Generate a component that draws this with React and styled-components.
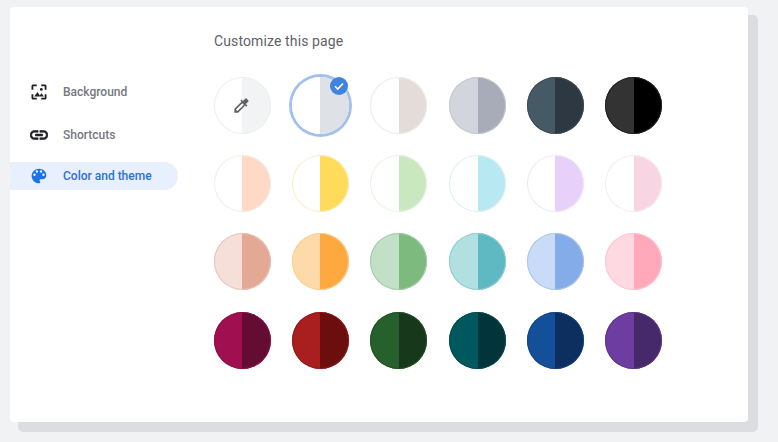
import React from "react";
import styled, { createGlobalStyle } from "styled-components";

const GlobalStyle = createGlobalStyle`
  html, body {
    margin: 0;
    padding: 0;
    background: #f1f2f4;
  }
  body {
    font-family: Roboto, "Liberation Sans", sans-serif;
  }
`;

const Page = styled.div`
  width: 778px;
  height: 442px;
  padding: 7px 0 0 10px;
  box-sizing: border-box;
  overflow: hidden;
`;

const Card = styled.div`
  display: flex;
  width: 738px;
  height: 415px;
  background: #ffffff;
  border-radius: 4px;
  box-shadow: 9px 9px 0 1px #dcdde0;
`;

const Sidebar = styled.nav`
  display: flex;
  flex-direction: column;
  width: 168px;
  margin-right: 36px;
  padding-top: 71px;
`;

const NavItem = styled.div`
  display: flex;
  align-items: center;
  gap: 15px;
  height: 28px;
  margin-top: ${(props) => props.$top || 0}px;
  padding-left: 20px;
  border-radius: 0 14px 14px 0;
  font-size: 12px;
  font-weight: 500;
  color: ${(props) => (props.$active ? "#2d72d2" : "#75787c")};
  background: ${(props) => (props.$active ? "#e8f0fe" : "transparent")};
`;

const NavIcon = styled.svg`
  width: 18px;
  height: 18px;
  flex: none;
  fill: ${(props) => (props.$active ? "#1a73e8" : "#202124")};
  stroke: ${(props) => (props.$bold ? "#202124" : "none")};
  stroke-width: ${(props) => (props.$bold ? 0.7 : 0)};
`;

const Main = styled.main`
  flex: 1;
  display: flex;
  flex-direction: column;
`;

const Title = styled.h1`
  margin: 26px 0 0;
  height: 17px;
  font-size: 14px;
  line-height: 17px;
  font-weight: 400;
  letter-spacing: 0.12px;
  color: #5f6368;
`;

const Grid = styled.div`
  display: grid;
  grid-template-columns: repeat(6, 57px);
  grid-auto-rows: 57px;
  gap: 21.2px;
  margin-top: 27px;
`;

const Swatch = styled.div`
  position: relative;
  display: flex;
  align-items: center;
  justify-content: center;
  width: 57px;
  height: 57px;
  border-radius: 50%;
  background: linear-gradient(
    90deg,
    ${(props) => props.$left} 50%,
    ${(props) => props.$right} 50%
  );
  box-shadow: ${(props) =>
    props.$selected
      ? "0 0 0 3px #a3c1ea"
      : `inset 0 0 0 1px ${props.$edge}`};
`;

const Badge = styled.span`
  position: absolute;
  top: 0;
  right: 1px;
  display: flex;
  align-items: center;
  justify-content: center;
  width: 18px;
  height: 18px;
  border-radius: 50%;
  background: #3f82e0;
`;

const Picker = styled.svg`
  width: 19px;
  height: 19px;
  fill: #5f6368;
  transform: translateX(-1px);
`;

const rows = [
  ["#ffffff", "#f1f3f4", "#eeeeee"],
  ["#ffffff", "#dee1e6", "#dee1e6"],
  ["#ffffff", "#e3dcd8", "#eeebe9"],
  ["#d3d5dd", "#a8acb9", "#c4c6d0"],
  ["#465a66", "#2d3843", "#3c4b56"],
  ["#333333", "#000000", "#222222"],
  ["#ffffff", "#fdd9c6", "#f5ece5"],
  ["#ffffff", "#ffdb5c", "#f8eec4"],
  ["#ffffff", "#c9e8bf", "#e8f2e3"],
  ["#ffffff", "#b8e8f2", "#dbf1f5"],
  ["#ffffff", "#e7d1fb", "#efe7f7"],
  ["#ffffff", "#f8d5e3", "#f5ebef"],
  ["#f5dfd8", "#e3a995", "#e6c6bb"],
  ["#fed9a9", "#fea93f", "#fbcf94"],
  ["#c2e0c6", "#7cbb7d", "#a2cca6"],
  ["#b2dfe0", "#5eb9c2", "#90cdd2"],
  ["#c9dbf7", "#84ace8", "#adc6ee"],
  ["#ffd9e2", "#ffa9bb", "#fcc5d1"],
  ["#a01050", "#650c35", "#8a1047"],
  ["#a91e1e", "#6d0e0e", "#901818"],
  ["#26602c", "#17381b", "#215225"],
  ["#00585f", "#02343c", "#024a50"],
  ["#145099", "#0c2f60", "#114482"],
  ["#6d3da1", "#46296b", "#5d358a"],
];

const App = () => (
  <>
    <GlobalStyle />
    <Page>
      <Card>
        <Sidebar>
          <NavItem>
            <NavIcon viewBox="0 0 24 24">
              <path d="M4 2h5v2.4H4.4V9H2V4c0-1.1.9-2 2-2zm11 0h5c1.1 0 2 .9 2 2v5h-2.4V4.4H15V2zM2 15h2.4v4.6H9V22H4c-1.1 0-2-.9-2-2v-5zm17.6 0H22v5c0 1.1-.9 2-2 2h-5v-2.4h4.6V15zM10 12l-4.5 6h13l-3.2-4.2-2.3 2.9L10 12zm7-3.5a1.9 1.9 0 1 0-3.8 0 1.9 1.9 0 0 0 3.8 0z" />
            </NavIcon>
            Background
          </NavItem>
          <NavItem $top={15}>
            <NavIcon $bold viewBox="2 2 20 20">
              <path d="M3.9 12c0-1.71 1.39-3.1 3.1-3.1h4V7H7c-2.76 0-5 2.24-5 5s2.24 5 5 5h4v-1.9H7c-1.71 0-3.1-1.39-3.1-3.1zM8 13h8v-2H8v2zm9-6h-4v1.9h4c1.71 0 3.1 1.39 3.1 3.1s-1.39 3.1-3.1 3.1h-4V17h4c2.76 0 5-2.24 5-5s-2.24-5-5-5z" />
            </NavIcon>
            Shortcuts
          </NavItem>
          <NavItem $top={13} $active>
            <NavIcon $active viewBox="1 1 22 22">
              <path d="M12 3c-4.97 0-9 4.03-9 9s4.03 9 9 9c.83 0 1.5-.67 1.5-1.5 0-.39-.15-.74-.39-1.01-.23-.26-.38-.61-.38-.99 0-.83.67-1.5 1.5-1.5H16c2.76 0 5-2.24 5-5 0-4.42-4.03-8-9-8zm-5.5 9c-.83 0-1.5-.67-1.5-1.5S5.67 9 6.5 9 8 9.67 8 10.5 7.33 12 6.5 12zm3-4C8.67 8 8 7.33 8 6.5S8.67 5 9.5 5s1.5.67 1.5 1.5S10.33 8 9.5 8zm5 0c-.83 0-1.5-.67-1.5-1.5S13.67 5 14.5 5s1.5.67 1.5 1.5S15.33 8 14.5 8zm3 4c-.83 0-1.5-.67-1.5-1.5S16.67 9 17.5 9s1.5.67 1.5 1.5-.67 1.5-1.5 1.5z" />
            </NavIcon>
            Color and theme
          </NavItem>
        </Sidebar>
        <Main>
          <Title>Customize this page</Title>
          <Grid>
            {rows.map(([left, right, edge], index) => (
              <Swatch
                key={index}
                $left={left}
                $right={right}
                $edge={edge}
                $selected={index === 1}
              >
                {index === 0 && (
                  <Picker viewBox="0 0 24 24">
                    <path d="M20.71 5.63l-2.34-2.34c-.39-.39-1.02-.39-1.41 0l-3.12 3.12-1.93-1.91-1.41 1.41 1.42 1.42L3 16.25V21h4.75l8.92-8.92 1.42 1.42 1.41-1.41-1.92-1.92 3.12-3.12c.4-.4.4-1.03.01-1.42zM6.92 19L5 17.08l8.06-8.06 1.92 1.92L6.92 19z" />
                  </Picker>
                )}
                {index === 1 && (
                  <Badge>
                    <svg width="12" height="12" viewBox="0 0 24 24">
                      <path
                        d="M4 12.5l5.5 5.5L20 7"
                        fill="none"
                        stroke="#ffffff"
                        strokeWidth="3.4"
                      />
                    </svg>
                  </Badge>
                )}
              </Swatch>
            ))}
          </Grid>
        </Main>
      </Card>
    </Page>
  </>
);

export default App;
